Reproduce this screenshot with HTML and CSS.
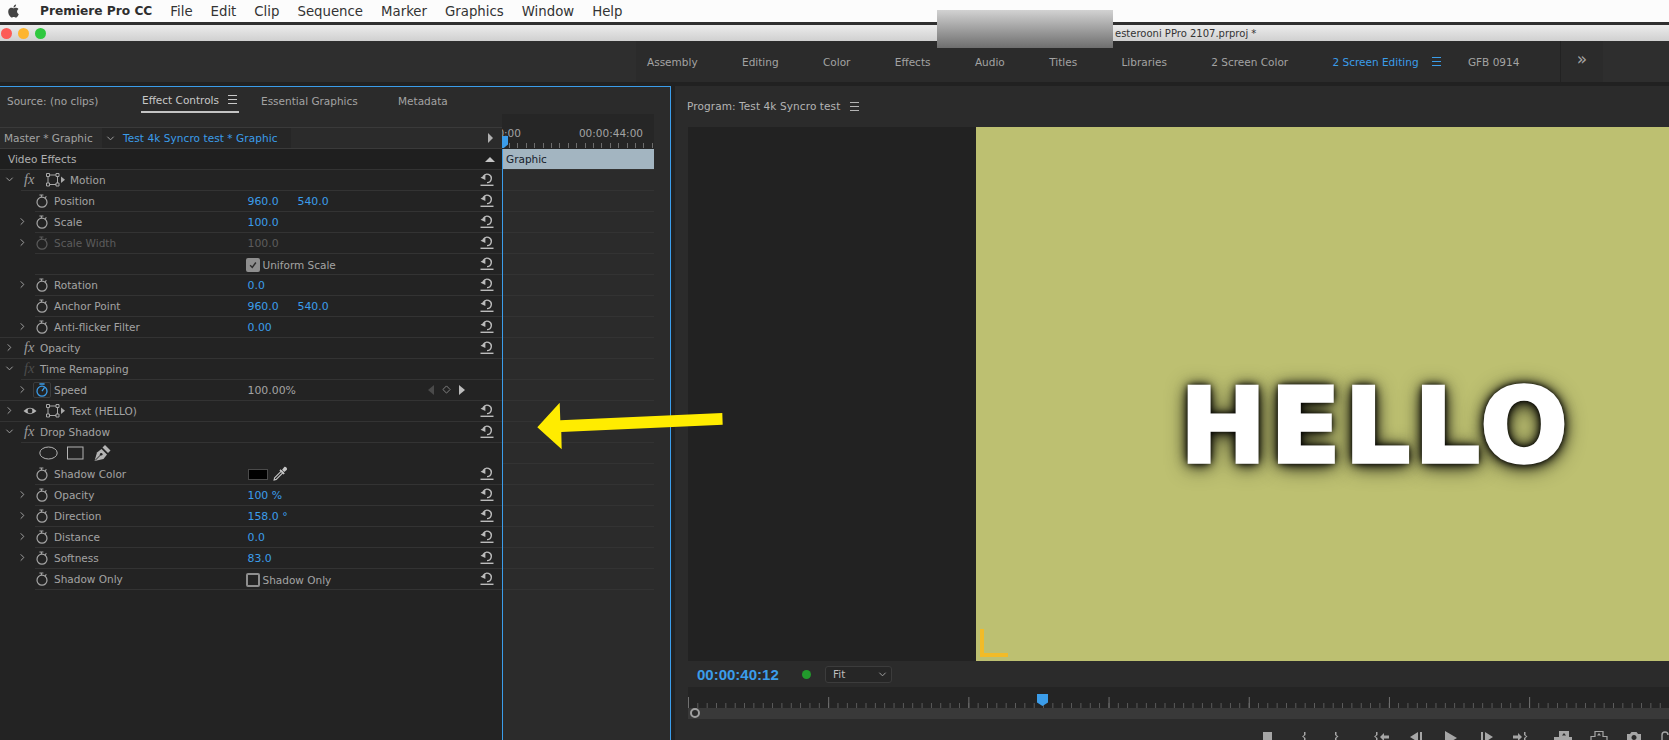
FILE: index.html
```html
<!DOCTYPE html>
<html lang="en">

<head>
    <meta charset="UTF-8">
    <title>Premiere Pro CC</title>
    <link rel="stylesheet" href="styles.css">
</head>

<body>
    <!-- Shared icons -->
    <svg class="defs" width="0" height="0">
        <symbol id="reset" viewBox="0 0 14 14">
            <path d="M7 9.6 A4.2 4.2 0 1 0 3.4 3.4" fill="none" stroke="currentColor" stroke-width="1.4" />
            <polygon points="0.6,4.8 5.4,1.6 5.4,7" fill="currentColor" />
            <rect x="0.5" y="11.6" width="13" height="1.4" fill="currentColor" />
        </symbol>
        <symbol id="watch" viewBox="0 0 12 14">
            <circle cx="6" cy="8.2" r="5" fill="none" stroke="currentColor" stroke-width="1.2" />
            <path d="M3.4 1 H7.4 M5.4 1 V3 M9 3.8 L10.4 2.4" fill="none" stroke="currentColor" stroke-width="1.1" />
        </symbol>
        <symbol id="watch-on" viewBox="0 0 12 14">
            <circle cx="6" cy="8.2" r="5" fill="none" stroke="currentColor" stroke-width="1.3" />
            <path d="M3.4 1 H8.6 M6 8.2 L8.6 4.4" fill="none" stroke="currentColor" stroke-width="1.3" />
        </symbol>
        <symbol id="right" viewBox="0 0 8 10">
            <polyline points="2,1.5 5.5,5 2,8.5" fill="none" stroke="currentColor" stroke-width="1.1" />
        </symbol>
        <symbol id="down" viewBox="0 0 10 8">
            <polyline points="1.5,2 5,5.5 8.5,2" fill="none" stroke="currentColor" stroke-width="1.1" />
        </symbol>
        <symbol id="transform" viewBox="0 0 20 14">
            <rect x="2" y="2" width="9.5" height="9.5" fill="none" stroke="currentColor" stroke-width="1" />
            <path d="M0.5 0.5 h3 v3 h-3 z M10 0.5 h3 v3 h-3 z M0.5 10 h3 v3 h-3 z M10 10 h3 v3 h-3 z" fill="#232323" stroke="currentColor" stroke-width="1" />
            <polygon points="15,3.5 19,6.7 15,10" fill="currentColor" />
        </symbol>
    </svg>

    <div class="menubar">
        <svg class="apple" viewBox="0 0 24 24">
            <path d="M12.152 6.896c-.948 0-2.415-1.078-3.96-1.04-2.04.027-3.91 1.183-4.961 3.014-2.117 3.675-.546 9.103 1.519 12.09 1.013 1.454 2.208 3.09 3.792 3.039 1.52-.065 2.09-.987 3.935-.987 1.831 0 2.35.987 3.96.948 1.637-.026 2.676-1.48 3.676-2.948 1.156-1.688 1.636-3.325 1.662-3.415-.039-.013-3.182-1.221-3.22-4.857-.026-3.04 2.48-4.494 2.597-4.559-1.429-2.09-3.623-2.324-4.39-2.376-2-.156-3.675 1.09-4.61 1.09zM15.53 3.83c.843-1.012 1.4-2.427 1.245-3.83-1.207.052-2.662.805-3.532 1.818-.78.896-1.454 2.338-1.273 3.714 1.338.104 2.715-.688 3.559-1.701" />
        </svg>
        <b class="app-name">Premiere Pro CC</b>
        <span>File</span>
        <span>Edit</span>
        <span>Clip</span>
        <span>Sequence</span>
        <span>Marker</span>
        <span>Graphics</span>
        <span>Window</span>
        <span>Help</span>
    </div>

    <div class="titlebar">
        <i class="light red"></i>
        <i class="light amber"></i>
        <i class="light green"></i>
        <span class="doc-name">esterooni PPro 2107.prproj *</span>
    </div>
    <div class="redact"></div>

    <div class="workspaces">
        <div class="ws-tabs">
            <span>Assembly</span>
            <span>Editing</span>
            <span>Color</span>
            <span>Effects</span>
            <span>Audio</span>
            <span>Titles</span>
            <span>Libraries</span>
            <span>2 Screen Color</span>
            <span class="ws-active">2 Screen Editing <em class="burger"></em></span>
            <span>GFB 0914</span>
        </div>
        <div class="ws-more">»</div>
    </div>

    <div class="main">
        <section class="left-panel">
            <div class="tabs">
                <span class="tab-source">Source: (no clips)</span>
                <span class="tab-active">Effect Controls <em class="burger"></em></span>
                <span class="tab-essential">Essential Graphics</span>
                <span class="tab-meta">Metadata</span>
            </div>

            <div class="fx-body">
                <div class="fx-list">
                    <div class="clip-tabs">
                        <span class="master">Master * Graphic</span>
                        <span class="clip-active">
                            <svg class="ic-chev"><use href="#down" /></svg>
                            Test 4k Syncro test * Graphic
                        </span>
                        <i class="tri-right"></i>
                    </div>
                    <div class="fx-head">Video Effects <i class="tri-up"></i></div>

                    <div class="row top first">
                        <svg class="ic-chev"><use href="#down" /></svg><span class="fx">fx</span>
                        <svg class="ic-transform"><use href="#transform" /></svg><span class="label">Motion</span>
                        <svg class="ic-reset"><use href="#reset" /></svg>
                    </div>
                    <div class="row param sub">
                        <span class="nochev"></span><svg class="ic-watch"><use href="#watch" /></svg>
                        <span class="name">Position</span><span class="val">960.0</span><span class="val">540.0</span>
                        <svg class="ic-reset"><use href="#reset" /></svg>
                    </div>
                    <div class="row param">
                        <svg class="ic-chev"><use href="#right" /></svg><svg class="ic-watch"><use href="#watch" /></svg>
                        <span class="name">Scale</span><span class="val">100.0</span>
                        <svg class="ic-reset"><use href="#reset" /></svg>
                    </div>
                    <div class="row param dim">
                        <svg class="ic-chev"><use href="#right" /></svg><svg class="ic-watch"><use href="#watch" /></svg>
                        <span class="name">Scale Width</span><span class="val">100.0</span>
                        <svg class="ic-reset lit"><use href="#reset" /></svg>
                    </div>
                    <div class="row param">
                        <span class="nochev"></span><span class="nowatch"></span>
                        <span class="name"></span><span class="check on"><svg viewBox="0 0 14 14"><polyline points="3,7.5 6,10.5 11,3.5" /></svg></span><span class="check-label">Uniform Scale</span>
                        <svg class="ic-reset"><use href="#reset" /></svg>
                    </div>
                    <div class="row param">
                        <svg class="ic-chev"><use href="#right" /></svg><svg class="ic-watch"><use href="#watch" /></svg>
                        <span class="name">Rotation</span><span class="val">0.0</span>
                        <svg class="ic-reset"><use href="#reset" /></svg>
                    </div>
                    <div class="row param">
                        <span class="nochev"></span><svg class="ic-watch"><use href="#watch" /></svg>
                        <span class="name">Anchor Point</span><span class="val">960.0</span><span class="val">540.0</span>
                        <svg class="ic-reset"><use href="#reset" /></svg>
                    </div>
                    <div class="row param">
                        <svg class="ic-chev"><use href="#right" /></svg><svg class="ic-watch"><use href="#watch" /></svg>
                        <span class="name">Anti-flicker Filter</span><span class="val">0.00</span>
                        <svg class="ic-reset"><use href="#reset" /></svg>
                    </div>
                    <div class="row top">
                        <svg class="ic-chev"><use href="#right" /></svg><span class="fx">fx</span>
                        <span class="label">Opacity</span>
                        <svg class="ic-reset"><use href="#reset" /></svg>
                    </div>
                    <div class="row top">
                        <svg class="ic-chev"><use href="#down" /></svg><span class="fx fx-dim">fx</span>
                        <span class="label">Time Remapping</span>
                    </div>
                    <div class="row param sub">
                        <svg class="ic-chev"><use href="#right" /></svg><span class="watch-box"><svg class="ic-watch"><use href="#watch-on" /></svg></span>
                        <span class="name">Speed</span><span class="val plain">100.00%</span>
                        <span class="keynav">
                            <i class="key-prev"></i>
                            <svg class="key-dot" viewBox="0 0 10 10"><polygon points="5,1 9,5 5,9 1,5" /></svg>
                            <i class="key-next"></i>
                        </span>
                    </div>
                    <div class="row top">
                        <svg class="ic-chev"><use href="#right" /></svg>
                        <svg class="ic-eye" viewBox="0 0 14 10"><path d="M0.5 5 Q7 -1.5 13.5 5 Q7 11.5 0.5 5 Z" /><circle cx="7" cy="5" r="2.4" fill="#232323" /></svg>
                        <svg class="ic-transform"><use href="#transform" /></svg><span class="label">Text (HELLO)</span>
                        <svg class="ic-reset"><use href="#reset" /></svg>
                    </div>
                    <div class="row top">
                        <svg class="ic-chev"><use href="#down" /></svg><span class="fx">fx</span>
                        <span class="label">Drop Shadow</span>
                        <svg class="ic-reset"><use href="#reset" /></svg>
                    </div>
                    <div class="row masks sub">
                        <svg class="mask-tools" viewBox="0 0 72 16">
                            <ellipse cx="9.5" cy="8" rx="8.7" ry="6" />
                            <rect x="28.5" y="2" width="15.5" height="12" />
                            <polygon class="pen" points="55.5,16 58,7.5 62.5,4 68,9.5 64.5,14" />
                            <polygon class="pen" points="63.5,2.5 66,0 71.5,5.5 69,8" />
                            <path class="pen-slit" d="M56 15.5 L61.5 10" />
                            <circle class="pen-eye" cx="62.2" cy="9.3" r="1.3" />
                        </svg>
                    </div>
                    <div class="row param noline">
                        <span class="nochev"></span><svg class="ic-watch"><use href="#watch" /></svg>
                        <span class="name">Shadow Color</span><span class="swatch"></span>
                        <svg class="dropper" viewBox="0 0 14 14">
                            <path class="dropper-glass" d="M8 4.5 L1.5 11 L1 13 L3 12.5 L9.5 6 Z" />
                            <path d="M7 3 L11 7 L9.8 8 L6 4.2 Z M8.5 3.5 L10.5 1 C11.5 0 13.8 2.3 13 3.5 L10.5 5.5 Z" />
                        </svg>
                        <svg class="ic-reset"><use href="#reset" /></svg>
                    </div>
                    <div class="row param">
                        <svg class="ic-chev"><use href="#right" /></svg><svg class="ic-watch"><use href="#watch" /></svg>
                        <span class="name">Opacity</span><span class="val">100 %</span>
                        <svg class="ic-reset"><use href="#reset" /></svg>
                    </div>
                    <div class="row param">
                        <svg class="ic-chev"><use href="#right" /></svg><svg class="ic-watch"><use href="#watch" /></svg>
                        <span class="name">Direction</span><span class="val">158.0 °</span>
                        <svg class="ic-reset"><use href="#reset" /></svg>
                    </div>
                    <div class="row param">
                        <svg class="ic-chev"><use href="#right" /></svg><svg class="ic-watch"><use href="#watch" /></svg>
                        <span class="name">Distance</span><span class="val">0.0</span>
                        <svg class="ic-reset"><use href="#reset" /></svg>
                    </div>
                    <div class="row param">
                        <svg class="ic-chev"><use href="#right" /></svg><svg class="ic-watch"><use href="#watch" /></svg>
                        <span class="name">Softness</span><span class="val">83.0</span>
                        <svg class="ic-reset"><use href="#reset" /></svg>
                    </div>
                    <div class="row param last">
                        <span class="nochev"></span><svg class="ic-watch"><use href="#watch" /></svg>
                        <span class="name">Shadow Only</span><span class="check"></span><span class="check-label">Shadow Only</span>
                        <svg class="ic-reset"><use href="#reset" /></svg>
                    </div>
                </div>

                <div class="timeline">
                    <div class="tl-ruler">
                        <span class="tl-start">0:00</span>
                        <span class="tl-end">00:00:44:00</span>
                        <i class="tl-head"></i>
                    </div>
                    <div class="tl-track">
                        <div class="tl-clip">Graphic</div>
                    </div>
                </div>
            </div>
        </section>

        <section class="program">
            <div class="program-head">Program: Test 4k Syncro test <em class="burger"></em></div>

            <div class="viewer">
                <div class="pasteboard"></div>
                <div class="frame">
                    <span class="hello">HELLO</span>
                    <i class="safe-corner"></i>
                </div>
            </div>

            <div class="controls">
                <span class="timecode">00:00:40:12</span>
                <i class="status-dot"></i>
                <span class="fit">Fit <svg class="ic-chev"><use href="#down" /></svg></span>
            </div>

            <div class="scrub">
                <i class="playhead"></i>
            </div>
            <div class="zoombar"><i class="zoom-handle"></i></div>

            <div class="transport">
                <svg width="410" height="21" viewBox="0 0 410 21">
                    <rect x="3" y="13" width="9" height="9" />
                    <path d="M44 13 h1.5 v3 l-2 1.5 l2 1.5 v3 h-1.5 v-3 l-2 -1.5 l2 -1.5 z" />
                    <path d="M75 13 h1.5 v3 l2 1.5 l-2 1.5 v3 h-1.5 v-3 l1.8 -1.5 l-1.8 -1.5 z" />
                    <path d="M116 13 h1.5 v3 l-2 1.5 l2 1.5 v3 h-1.5 v-3 l-2 -1.5 l2 -1.5 z M120 18 l4 -4 v2.5 h5 v3 h-5 v2.5 z" />
                    <path d="M150 18 l8 -5 v10 z M160 13 h2 v9 h-2 z" />
                    <path d="M185 12 l12 7 l-12 7 z" />
                    <path d="M221 13 h2 v9 h-2 z M225 13 l8 5 l-8 5 z" />
                    <path d="M253 16.5 h5 v-2.5 l4 4 l-4 4 v-2.5 h-5 z M264 13 h1.5 v3 l2 1.5 l-2 1.5 v3 h-1.5 v-3 l2 -1.5 l-2 -1.5 z" />
                    <path fill-rule="evenodd" d="M299 12 h10 v6 h3 v4 h-18 v-4 h5 z M304 14 l-2 2.5 h4 z" />
                    <path fill="none" stroke="#a6a6a6" stroke-width="1.2" d="M335 12.5 h8 v5 h4 v5 h-16 v-5 h4 z" />
                    <path d="M339 14 l-2 2.5 h4 z" />
                    <path fill-rule="evenodd" d="M367 15 h3 l1.5 -2 h5 l1.5 2 h3 v7 h-14 z M374 16 a2.5 2.5 0 1 0 0.01 0 z" />
                    <path fill="none" stroke="#a6a6a6" stroke-width="1.4" d="M402 22 v-6 a3 3 0 0 1 6 0" />
                </svg>
            </div>
        </section>
    </div>

    <svg class="arrow" viewBox="0 0 196 50">
        <polygon points="7.3,27.3 29.7,2.7 30.3,20.3 192.3,13 192.7,24.7 31.3,32 31.7,49.3" />
    </svg>
</body>

</html>
```

FILE: styles.css
```css
:root {
    --blue: #3b9dea;
    --panel: #2b2b2b;
    --list: #232323;
    --line: #333333;
    --text: #a3a3a3;
    --ui-font: "DejaVu Sans", Verdana, sans-serif;
}

html,
body {
    margin: 0;
    height: 740px;
    overflow: hidden;
}

body {
    display: flex;
    flex-direction: column;
    position: relative;
    background-color: #212121;
    color: var(--text);
    font-family: var(--ui-font);
    font-size: 10.5px;
}

i,
em {
    display: block;
    font-style: normal;
}

.defs {
    position: absolute;
}

/* Mac menu bar */
.menubar {
    display: flex;
    align-items: center;
    height: 22px;
    background-color: #fcfcfc;
    color: #333;
    font-size: 13.3px;
    gap: 18px;
    border-bottom: 3px solid #2f2f2f;
}

.apple {
    width: 13px;
    height: 14px;
    margin-left: 7px;
    margin-right: 2px;
    fill: #444;
}

.app-name {
    color: #2e2e2e;
    font-size: 12.2px;
}

/* Window title bar */
.titlebar {
    display: flex;
    align-items: center;
    height: 16px;
    background: linear-gradient(#ececec, #d0d0d0);
    padding-left: 1px;
    gap: 6px;
}

.light {
    width: 11px;
    height: 11px;
    border-radius: 50%;
}

.red {
    background-color: #fc5b57;
}

.amber {
    background-color: #fdb52f;
}

.green {
    background-color: #2fc83f;
}

.doc-name {
    margin-left: 1063px;
    color: #333;
    font-size: 10px;
}

.redact {
    position: absolute;
    left: 937px;
    top: 10px;
    width: 176px;
    height: 38px;
    background: linear-gradient(#d2d2d2, #6e6e6e);
}

/* Workspace tabs */
.workspaces {
    display: flex;
    height: 41px;
    margin-bottom: 4px;
    padding-left: 636px;
    background-color: #2e2e2e;
}

.ws-tabs {
    display: flex;
    align-items: center;
    gap: 44.4px;
    width: 925px;
    padding-left: 11px;
    box-sizing: border-box;
    background-color: #2b2b2b;
    border-right: 1px solid #222;
}

.ws-active {
    display: flex;
    align-items: center;
    gap: 13px;
    margin-right: -17px;
    color: var(--blue);
}

.ws-more {
    width: 42px;
    text-align: center;
    font-size: 17px;
    line-height: 37px;
    background-color: #2b2b2b;
}

.burger {
    display: inline-block;
    width: 9px;
    height: 7px;
    border-top: 1px solid currentColor;
    border-bottom: 1px solid currentColor;
    background: linear-gradient(currentColor, currentColor) center / 100% 1px no-repeat;
}

/* Panels */
.main {
    display: flex;
    flex: 1;
    min-height: 0;
}

.left-panel {
    width: 670px;
    border-top: 1px solid var(--blue);
    border-right: 1px solid var(--blue);
    background-color: var(--panel);
    margin-right: 4px;
    overflow: hidden;
}

.tabs {
    display: flex;
    align-items: center;
    height: 27px;
}

.tabs span {
    white-space: nowrap;
}

.tab-source {
    margin-left: 7px;
    width: 134px;
}

.tab-active {
    display: flex;
    align-items: center;
    gap: 9px;
    width: 98px;
    height: 24px;
    box-sizing: border-box;
    padding-left: 1px;
    color: #c8c8c8;
    border-bottom: 2px solid #c4c4c4;
}

.tab-essential {
    margin-left: 22px;
    width: 137px;
}

.fx-body {
    display: flex;
    height: 627px;
}

.fx-list {
    width: 502px;
    padding-top: 13px;
    box-sizing: border-box;
    background: linear-gradient(var(--panel), var(--panel)) 0 0 / 100% 13px no-repeat, var(--list);
}

.clip-tabs {
    display: flex;
    align-items: center;
    height: 21px;
    box-sizing: border-box;
    border-top: 1px solid #3a3a3a;
    background-color: var(--panel);
}

.master {
    width: 102px;
    padding-left: 4px;
    box-sizing: border-box;
    white-space: nowrap;
}

.clip-active {
    display: flex;
    align-items: center;
    gap: 8px;
    width: 189px;
    height: 20px;
    padding-left: 4px;
    box-sizing: border-box;
    background-color: #262626;
    color: var(--blue);
    letter-spacing: 0.08px;
    white-space: nowrap;
}

.tri-right {
    margin-left: auto;
    margin-right: 9px;
    border-left: 5px solid #b0b0b0;
    border-top: 5px solid transparent;
    border-bottom: 5px solid transparent;
}

.fx-head {
    display: flex;
    align-items: center;
    justify-content: space-between;
    height: 21px;
    box-sizing: border-box;
    padding: 0 7px 0 8px;
    border-top: 1px solid #3a3a3a;
    background-color: #1f1f1f;
    color: #b0b0b0;
}

.tri-up {
    border-bottom: 5px solid #c4c4c4;
    border-left: 5px solid transparent;
    border-right: 5px solid transparent;
}

/* Effect rows */
.row {
    display: flex;
    align-items: center;
    position: relative;
    height: 21px;
    background-color: var(--list);
    white-space: nowrap;
}

.row::before {
    content: "";
    position: absolute;
    top: 0;
    left: 35px;
    right: 0;
    height: 1px;
    background-color: var(--line);
}

.row.top::before {
    left: 0;
}

.row.sub::before {
    left: 21px;
}

.row.noline::before {
    display: none;
}

.row.last::after {
    content: "";
    position: absolute;
    bottom: -1px;
    left: 35px;
    right: 0;
    height: 1px;
    background-color: var(--line);
}

.ic-chev {
    flex: none;
    width: 9px;
    height: 9px;
    color: #a0a0a0;
}

.row.top .ic-chev {
    margin-left: 5px;
    margin-right: 10px;
}

.row.param .ic-chev,
.nochev {
    flex: none;
    width: 9px;
    height: 9px;
    margin-left: 18px;
    margin-right: 9px;
}

.nowatch {
    flex: none;
    width: 12px;
}

.fx {
    width: 16px;
    flex: none;
    font-family: "Liberation Serif", serif;
    font-style: italic;
    font-size: 14.5px;
    color: #9c9c9c;
}

.fx-dim {
    color: #4c4c4c;
}

.ic-transform {
    flex: none;
    width: 20px;
    height: 14px;
    margin-left: 6px;
    margin-right: 4px;
    color: #a8a8a8;
}

.ic-eye {
    flex: none;
    width: 14px;
    height: 10px;
    margin-right: 3px;
    margin-left: -1px;
    fill: #b4b4b4;
}

.ic-watch {
    flex: none;
    width: 12px;
    height: 14px;
    color: #a6a6a6;
}

.name {
    flex: none;
    width: 193.5px;
    margin-left: 6px;
}

.val {
    width: 50px;
    flex: none;
    padding-top: 2px;
    font-size: 10.9px;
    color: var(--blue);
}

.val.plain {
    color: var(--text);
}

.ic-reset {
    flex: none;
    width: 14px;
    height: 14px;
    margin-left: auto;
    margin-right: 8px;
    color: #bcbcbc;
}

.dim .name,
.dim .val,
.dim .ic-watch {
    color: #5c5c5c;
}

.watch-box {
    display: flex;
    padding: 0 2px;
    border: 1px solid #3c3c3c;
    border-radius: 2px;
    margin-left: -3px;
    margin-right: -3px;
}

.watch-box .ic-watch {
    color: var(--blue);
}

.check {
    display: block;
    flex: none;
    width: 14px;
    height: 14px;
    box-sizing: border-box;
    margin-top: 2px;
    margin-left: -2px;
    margin-right: 3px;
    border: 2px solid #8e8e8e;
    border-radius: 2px;
}

.check svg {
    display: block;
    width: 10px;
    height: 10px;
}

.check polyline {
    fill: none;
    stroke: #2c2c2c;
    stroke-width: 2;
}

.check.on {
    background-color: #8e8e8e;
}

.check-label {
    padding-top: 2px;
}

.keynav {
    display: flex;
    align-items: center;
    margin-left: 130px;
    gap: 8px;
}

.key-prev {
    border-right: 6px solid #4a4a4a;
    border-top: 5px solid transparent;
    border-bottom: 5px solid transparent;
}

.key-next {
    border-left: 6px solid #bdbdbd;
    border-top: 5px solid transparent;
    border-bottom: 5px solid transparent;
}

.key-dot {
    width: 9px;
    height: 9px;
    fill: none;
    stroke: #8a8a8a;
}

.mask-tools {
    width: 72px;
    height: 16px;
    margin-left: 38.5px;
    fill: none;
    stroke: #b4b4b4;
}

.mask-tools .pen {
    fill: #b4b4b4;
    stroke: none;
}

.mask-tools .pen-slit {
    stroke: #232323;
}

.mask-tools .pen-eye {
    fill: #232323;
    stroke: none;
}

.swatch {
    flex: none;
    width: 20px;
    height: 11px;
    margin-top: 2px;
    background-color: #000;
    border: 1px solid #4a4a4a;
    box-sizing: border-box;
}

.dropper {
    width: 15px;
    height: 15px;
    margin-left: 5px;
    fill: #c4c4c4;
}

.dropper-glass {
    fill: none;
    stroke: #c4c4c4;
}

/* Mini timeline in Effect Controls */
.timeline {
    width: 152px;
}

.tl-ruler {
    position: relative;
    display: flex;
    justify-content: space-between;
    height: 35px;
    box-sizing: border-box;
    padding: 13px 11px 0 0;
    background-color: #262626;
}

.tl-ruler::after {
    content: "";
    position: absolute;
    left: 0;
    right: 0;
    top: 29px;
    height: 5px;
    background: repeating-linear-gradient(90deg, transparent 0 7px, #6c6c6c 7px 8px, transparent 8px 8.4px);
}

.tl-start {
    width: 19px;
    overflow: hidden;
    direction: rtl;
}

.tl-head {
    position: absolute;
    left: 0;
    top: 22px;
    width: 6px;
    height: 12px;
    background-color: var(--blue);
    clip-path: polygon(0 0, 100% 0, 100% 70%, 30% 100%, 0 100%);
    z-index: 1;
}

.tl-track {
    height: 592px;
    border-left: 1px solid var(--blue);
    background: repeating-linear-gradient(transparent 0 20px, var(--line) 20px 21px) 0 0 / 100% 441px no-repeat;
}

.tl-clip {
    height: 20px;
    line-height: 21px;
    padding-left: 3px;
    background-color: #a3b5c1;
    color: #15202b;
}

/* Program monitor */
.program {
    flex: 1;
    min-width: 0;
    background-color: var(--panel);
}

.program-head {
    display: flex;
    align-items: center;
    gap: 10px;
    height: 41px;
    padding-left: 12px;
    padding-bottom: 1px;
    box-sizing: border-box;
    color: #b4b4b4;
    letter-spacing: 0.1px;
    white-space: nowrap;
}

.viewer {
    display: flex;
    height: 534px;
    margin-left: 13px;
}

.pasteboard {
    width: 288px;
    background-color: #222;
}

.frame {
    flex: 1;
    position: relative;
    background-color: #bdc071;
}

.hello {
    position: absolute;
    left: 204px;
    top: 248px;
    font-family: "DejaVu Sans", sans-serif;
    font-weight: bold;
    font-size: 103px;
    line-height: 1;
    letter-spacing: 4px;
    color: #fff;
    -webkit-text-stroke: 3.5px #fff;
    text-shadow: 0 0 2px #000, 0 0 5px #000, 0 0 9px #000, 0 1px 14px #000, 0 3px 22px rgba(0, 0, 0, 0.85);
}

.safe-corner {
    position: absolute;
    left: 4px;
    bottom: 4px;
    width: 28px;
    height: 28px;
    box-sizing: border-box;
    border-left: 4px solid #f2bb28;
    border-bottom: 4px solid #f2bb28;
    filter: drop-shadow(0 0 0.5px #a8a8b4);
}

.controls {
    display: flex;
    align-items: center;
    height: 26px;
    padding-left: 22px;
}

.timecode {
    width: 105px;
    font-family: "Liberation Sans", Arial, sans-serif;
    font-weight: bold;
    font-size: 15px;
    color: var(--blue);
}

.status-dot {
    width: 9px;
    height: 9px;
    border-radius: 50%;
    background-color: #229a2c;
    margin-right: 14px;
}

.fit {
    display: flex;
    align-items: center;
    justify-content: space-between;
    width: 67px;
    height: 17px;
    box-sizing: border-box;
    padding: 0 4px 0 7px;
    border: 1px solid #3c3c3c;
    border-radius: 3px;
    background-color: #262626;
    color: #bdbdbd;
}

.scrub {
    position: relative;
    height: 21px;
    margin-left: 13px;
    background-color: #242424;
    background-image:
        linear-gradient(90deg, #707070 0 1px, transparent 1px),
        linear-gradient(90deg, #5c5c5c 0 1px, transparent 1px);
    background-size: 140.2px 11px, 9.345px 5px;
    background-repeat: repeat-x;
    background-position: 0 bottom, 0 bottom;
}

.playhead {
    position: absolute;
    left: 349px;
    top: 7px;
    width: 11px;
    height: 12px;
    background-color: var(--blue);
    clip-path: polygon(0 0, 100% 0, 100% 70%, 50% 100%, 0 70%);
}

.zoombar {
    position: relative;
    height: 11px;
    margin-left: 13px;
    background-color: #393939;
}

.zoom-handle {
    position: absolute;
    left: 2px;
    top: 0;
    width: 10px;
    height: 10px;
    box-sizing: border-box;
    border: 2px solid #a0a0a0;
    border-radius: 50%;
    background-color: #2b2b2b;
}

.transport {
    height: 21px;
    padding-left: 585px;
    fill: #a6a6a6;
}

.transport svg {
    display: block;
}

/* Yellow annotation arrow laid over the screenshot */
.arrow {
    position: absolute;
    left: 530px;
    top: 400px;
    width: 196px;
    height: 50px;
    fill: #ffec00;
}
```
